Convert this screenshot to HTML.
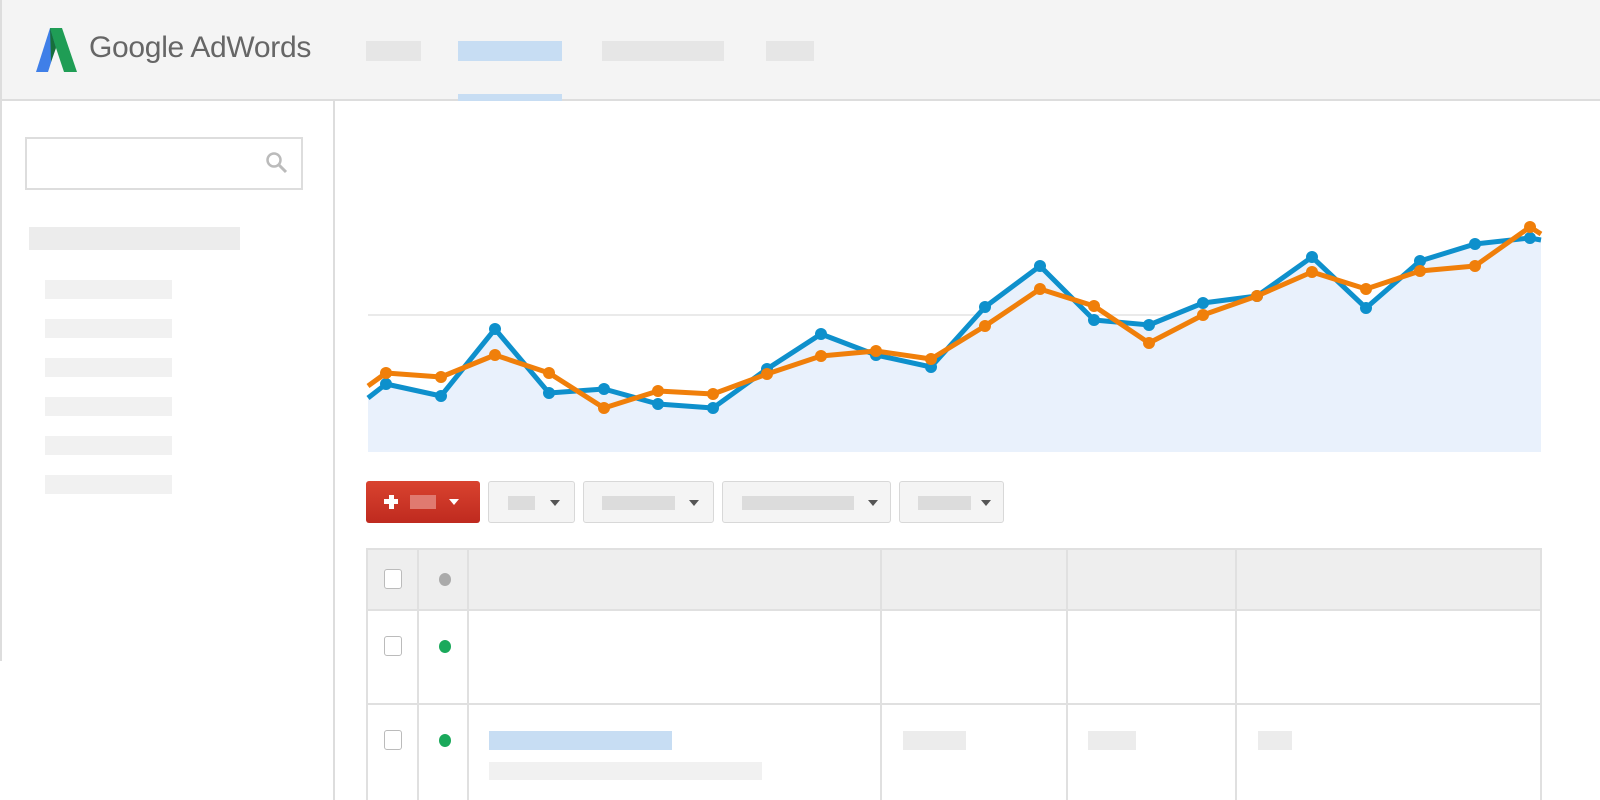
<!DOCTYPE html><html><head><style>
body{margin:0;width:1600px;height:800px;overflow:hidden;background:#fff;font-family:"Liberation Sans",sans-serif;position:relative}
div{position:absolute;box-sizing:border-box}
.g{background:#f1f1f1}
.btn{top:481px;height:42px;border:1px solid #d8d8d8;border-radius:3px;background:#f4f4f4}
.btn .b{top:14px;height:14px;background:#dcdcdc}
.tri{width:0;height:0;border-left:5px solid transparent;border-right:5px solid transparent;border-top:6px solid #555;top:18px}
.hl{height:2px;background:#e0e0e0}
.vl{width:2px;background:#e0e0e0}
.cb{width:18px;height:20px;border:1px solid #bbb;border-radius:3px;background:#fff}
</style></head><body>
<div style="left:0;top:0;width:1600px;height:101px;background:#f4f4f4;border-bottom:2px solid #ddd;border-left:2px solid #ddd"></div>
<svg style="position:absolute;left:36px;top:28px" width="42" height="46"><polygon points="14,0 26,0 12,44 0,44" fill="#3f7fe8"/><polygon points="14,0 26,0 41,44 28,44 20,20" fill="#1f9d55"/><polygon points="14,0 20,20 15,34" fill="#176f3a"/></svg>
<div style="left:89px;top:31px;font-size:30px;color:#666;letter-spacing:-0.3px">Google AdWords</div>
<div style="left:366px;top:41px;width:55px;height:20px;background:#e6e6e6"></div>
<div style="left:458px;top:41px;width:104px;height:20px;background:#c7ddf3"></div>
<div style="left:458px;top:94px;width:104px;height:7px;background:#c7ddf3"></div>
<div style="left:602px;top:41px;width:122px;height:20px;background:#e6e6e6"></div>
<div style="left:766px;top:41px;width:48px;height:20px;background:#e6e6e6"></div>
<div style="left:0;top:101px;width:2px;height:560px;background:#ddd"></div>
<div style="left:333px;top:101px;width:2px;height:699px;background:#ddd"></div>
<div style="left:25px;top:137px;width:278px;height:53px;border:2px solid #ddd;background:#fff"></div>
<svg style="position:absolute;left:265px;top:151px" width="24" height="24"><circle cx="9" cy="9" r="6.5" fill="none" stroke="#bbb" stroke-width="2.5"/><line x1="14" y1="14" x2="21" y2="21" stroke="#bbb" stroke-width="3"/></svg>
<div class="g" style="left:29px;top:227px;width:211px;height:23px;background:#ececec"></div>
<div class="g" style="left:45px;top:280px;width:127px;height:19px"></div>
<div class="g" style="left:45px;top:319px;width:127px;height:19px"></div>
<div class="g" style="left:45px;top:358px;width:127px;height:19px"></div>
<div class="g" style="left:45px;top:397px;width:127px;height:19px"></div>
<div class="g" style="left:45px;top:436px;width:127px;height:19px"></div>
<div class="g" style="left:45px;top:475px;width:127px;height:19px"></div>
<svg style="position:absolute;left:0;top:0" width="1600" height="470">
<line x1="368" y1="315" x2="1541" y2="315" stroke="#e4e4e4" stroke-width="1.5"/>
<polygon fill="#e9f1fc" points="368,452 368,398 386,384 441,396 495,329 549,393 604,389 658,404 713,408 767,369 821,334 876,355 931,367 985,307 1040,266 1094,320 1149,325 1203,303 1257,296 1312,257 1366,308 1420,261 1475,244 1530,238 1541,240 1541,452"/>
<g fill="#0e90cc"><polyline fill="none" stroke="#0e90cc" stroke-width="5" stroke-linejoin="round" points="368,398 386,384 441,396 495,329 549,393 604,389 658,404 713,408 767,369 821,334 876,355 931,367 985,307 1040,266 1094,320 1149,325 1203,303 1257,296 1312,257 1366,308 1420,261 1475,244 1530,238 1541,240"/>
<circle cx="386" cy="384" r="6"/><circle cx="441" cy="396" r="6"/><circle cx="495" cy="329" r="6"/><circle cx="549" cy="393" r="6"/><circle cx="604" cy="389" r="6"/><circle cx="658" cy="404" r="6"/><circle cx="713" cy="408" r="6"/><circle cx="767" cy="369" r="6"/><circle cx="821" cy="334" r="6"/><circle cx="876" cy="355" r="6"/><circle cx="931" cy="367" r="6"/><circle cx="985" cy="307" r="6"/><circle cx="1040" cy="266" r="6"/><circle cx="1094" cy="320" r="6"/><circle cx="1149" cy="325" r="6"/><circle cx="1203" cy="303" r="6"/><circle cx="1257" cy="296" r="6"/><circle cx="1312" cy="257" r="6"/><circle cx="1366" cy="308" r="6"/><circle cx="1420" cy="261" r="6"/><circle cx="1475" cy="244" r="6"/><circle cx="1530" cy="238" r="6"/></g>
<g fill="#f07f0a"><polyline fill="none" stroke="#f07f0a" stroke-width="5" stroke-linejoin="round" points="368,386 386,373 441,377 495,355 549,373 604,408 658,391 713,394 767,374 821,356 876,351 931,359 985,326 1040,289 1094,306 1149,343 1203,315 1257,296 1312,272 1366,289 1420,271 1475,266 1530,227 1541,234"/>
<circle cx="386" cy="373" r="6"/><circle cx="441" cy="377" r="6"/><circle cx="495" cy="355" r="6"/><circle cx="549" cy="373" r="6"/><circle cx="604" cy="408" r="6"/><circle cx="658" cy="391" r="6"/><circle cx="713" cy="394" r="6"/><circle cx="767" cy="374" r="6"/><circle cx="821" cy="356" r="6"/><circle cx="876" cy="351" r="6"/><circle cx="931" cy="359" r="6"/><circle cx="985" cy="326" r="6"/><circle cx="1040" cy="289" r="6"/><circle cx="1094" cy="306" r="6"/><circle cx="1149" cy="343" r="6"/><circle cx="1203" cy="315" r="6"/><circle cx="1257" cy="296" r="6"/><circle cx="1312" cy="272" r="6"/><circle cx="1366" cy="289" r="6"/><circle cx="1420" cy="271" r="6"/><circle cx="1475" cy="266" r="6"/><circle cx="1530" cy="227" r="6"/></g>
</svg>
<div style="left:366px;top:481px;width:114px;height:42px;border-radius:3px;background:linear-gradient(#d9432f,#bf2a1f)">
<div style="left:18px;top:18px;width:14px;height:5px;background:#fff"></div><div style="left:22.5px;top:13.5px;width:5px;height:14px;background:#fff"></div>
<div style="left:44px;top:14px;width:26px;height:14px;background:#e07a70"></div>
<div class="tri" style="left:83px;border-top-color:#fff"></div></div>
<div class="btn" style="left:488px;width:87px"><div class="b" style="left:19px;width:27px"></div><div class="tri" style="left:61px"></div></div>
<div class="btn" style="left:583px;width:131px"><div class="b" style="left:18px;width:73px"></div><div class="tri" style="left:105px"></div></div>
<div class="btn" style="left:722px;width:169px"><div class="b" style="left:19px;width:112px"></div><div class="tri" style="left:145px"></div></div>
<div class="btn" style="left:899px;width:105px"><div class="b" style="left:18px;width:53px"></div><div class="tri" style="left:81px"></div></div>
<div style="left:366px;top:548px;width:1176px;height:62px;background:#eeeeee"></div>
<div class="hl" style="left:366px;top:548px;width:1176px"></div>
<div class="hl" style="left:366px;top:609px;width:1176px"></div>
<div class="hl" style="left:366px;top:703px;width:1176px"></div>
<div class="vl" style="left:366px;top:548px;height:252px"></div>
<div class="vl" style="left:417px;top:548px;height:252px"></div>
<div class="vl" style="left:467px;top:548px;height:252px"></div>
<div class="vl" style="left:880px;top:548px;height:252px"></div>
<div class="vl" style="left:1066px;top:548px;height:252px"></div>
<div class="vl" style="left:1235px;top:548px;height:252px"></div>
<div class="vl" style="left:1540px;top:548px;height:252px"></div>
<div class="cb" style="left:384px;top:569px"></div>
<div style="left:439px;top:573px;width:12px;height:13px;border-radius:50%;background:#aaa"></div>
<div class="cb" style="left:384px;top:636px"></div>
<div style="left:439px;top:640px;width:12px;height:13px;border-radius:50%;background:#1aa95b"></div>
<div class="cb" style="left:384px;top:730px"></div>
<div style="left:439px;top:734px;width:12px;height:13px;border-radius:50%;background:#1aa95b"></div>
<div style="left:489px;top:731px;width:183px;height:19px;background:#c7ddf3"></div>
<div style="left:489px;top:762px;width:273px;height:18px;background:#f1f1f1"></div>
<div style="left:903px;top:731px;width:63px;height:19px;background:#ececec"></div>
<div style="left:1088px;top:731px;width:48px;height:19px;background:#ececec"></div>
<div style="left:1258px;top:731px;width:34px;height:19px;background:#ececec"></div>
</body></html>
